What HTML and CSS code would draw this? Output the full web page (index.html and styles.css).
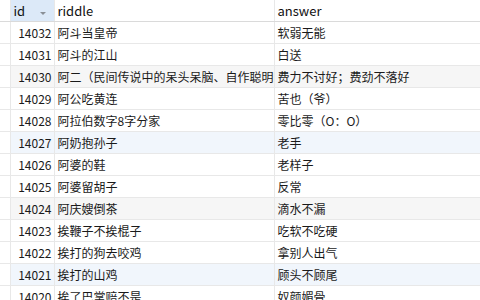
FILE: index.html
```html
<!DOCTYPE html>
<html lang="zh-CN">
<head>
<meta charset="utf-8">
<title>riddle</title>
<link rel="stylesheet" href="styles.css">
</head>
<body>
<table class="grid">
  <colgroup>
    <col class="c-mark">
    <col class="c-id">
    <col class="c-riddle">
    <col class="c-answer">
  </colgroup>
  <thead>
    <tr>
      <th class="mark"></th>
      <th class="sorted">id<span class="sort-arrow"></span></th>
      <th>riddle</th>
      <th>answer</th>
    </tr>
  </thead>
  <tbody>
    <tr><td class="mark"></td><td class="num">14032</td><td>阿斗当皇帝</td><td>软弱无能</td></tr>
    <tr><td class="mark"></td><td class="num">14031</td><td>阿斗的江山</td><td>白送</td></tr>
    <tr class="alt"><td class="mark"></td><td class="num">14030</td><td>阿二（民间传说中的呆头呆脑、自作聪明的人）</td><td>费力不讨好；费劲不落好</td></tr>
    <tr><td class="mark"></td><td class="num">14029</td><td>阿公吃黄连</td><td>苦也（爷）</td></tr>
    <tr><td class="mark"></td><td class="num">14028</td><td>阿拉伯数字8字分家</td><td>零比零（O：O）</td></tr>
    <tr class="hover"><td class="mark"></td><td class="num">14027</td><td>阿奶抱孙子</td><td>老手</td></tr>
    <tr><td class="mark"></td><td class="num">14026</td><td>阿婆的鞋</td><td>老样子</td></tr>
    <tr><td class="mark"></td><td class="num">14025</td><td>阿婆留胡子</td><td>反常</td></tr>
    <tr class="alt"><td class="mark"></td><td class="num">14024</td><td>阿庆嫂倒茶</td><td>滴水不漏</td></tr>
    <tr><td class="mark"></td><td class="num">14023</td><td>挨鞭子不挨棍子</td><td>吃软不吃硬</td></tr>
    <tr><td class="mark"></td><td class="num">14022</td><td>挨打的狗去咬鸡</td><td>拿别人出气</td></tr>
    <tr class="hover"><td class="mark"></td><td class="num">14021</td><td>挨打的山鸡</td><td>顾头不顾尾</td></tr>
    <tr><td class="mark"></td><td class="num">14020</td><td>挨了巴掌赔不是</td><td>奴颜媚骨</td></tr>
  </tbody>
</table>
</body>
</html>
```

FILE: styles.css
```css
html, body {
  margin: 0;
  padding: 0;
  background: #ffffff;
  overflow: hidden;
}

body {
  font-family: "Noto Sans CJK SC", "Noto Sans", sans-serif;
  font-size: 12px;
  color: #1a1a1a;
}

.grid {
  border-collapse: collapse;
  table-layout: fixed;
  width: 480px;
}

.c-mark { width: 10px; }
.c-id { width: 44px; }
.c-riddle { width: 220px; }
.c-answer { width: 206px; }

.grid th,
.grid td {
  height: 21px;
  padding: 0 0 0 3px;
  border: 1px solid #e8e8e8;
  white-space: nowrap;
  overflow: hidden;
  text-align: left;
  font-weight: normal;
  line-height: 21px;
}

.grid tr > :first-child { border-left: none; }
.grid tr > :last-child { border-right: none; }
.grid thead tr > * { border-top: none; border-bottom-color: #dadada; }

.grid th {
  font-size: 13px;
  color: #111;
}

.grid th.sorted {
  background: #dce9f8;
  position: relative;
}

.sort-arrow {
  position: absolute;
  left: 29px;
  top: 12px;
  width: 0;
  height: 0;
  border-left: 3px solid transparent;
  border-right: 3px solid transparent;
  border-top: 3px solid #8a8f96;
}

.grid td.num {
  text-align: right;
  padding: 0 2px 0 0;
}

.grid .mark { padding: 0; }

.grid tr.alt td { background: #f6f6f6; }
.grid tr.hover td { background: #f1f6fc; }
.grid tr.alt td.mark,
.grid tr.hover td.mark { background: #ffffff; }
```
